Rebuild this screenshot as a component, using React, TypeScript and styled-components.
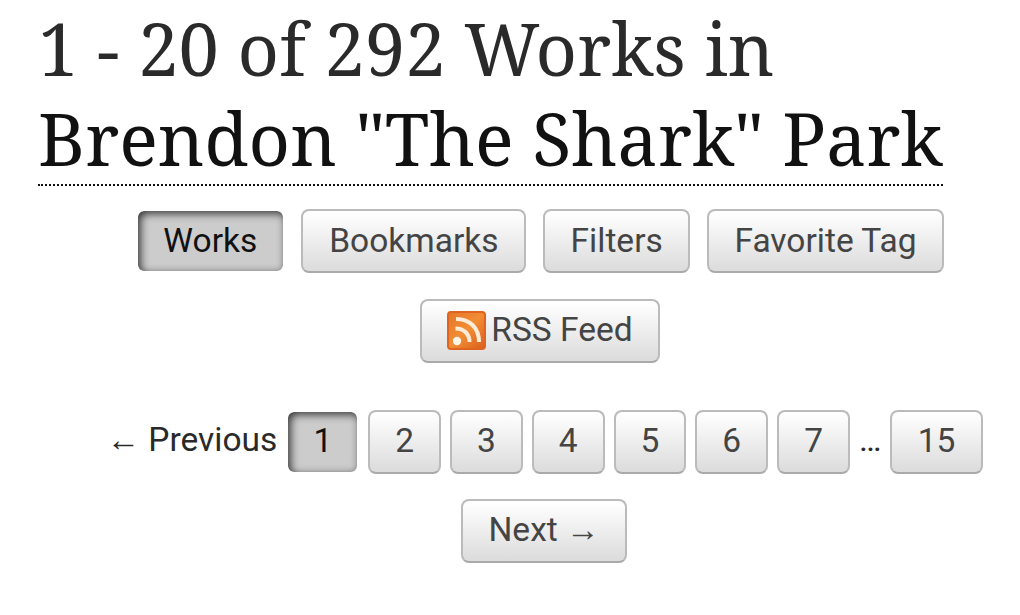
import React from 'react';
import styled, { createGlobalStyle, css } from 'styled-components';

const GlobalStyle = createGlobalStyle`
  * { box-sizing: border-box; }
  html, body { margin: 0; background: #fff; }
  body { color: #2a2a2a; font-family: Roboto, sans-serif; }
`;

const Page = styled.main`
  width: 1020px;
  height: 615px;
  overflow: hidden;
  padding: 3px 36px 0 38px;
`;

const Heading = styled.h2`
  margin: 0;
  font: 400 72.15px/90px 'Noto Serif', 'DejaVu Serif Condensed', 'DejaVu Serif', serif;
  white-space: nowrap;
`;

const HeadingLine = styled.span`
  display: block;
  height: 90px;
`;

const TagLink = styled.a`
  display: block;
  width: 905px;
  height: 93px;
  color: #111;
  border-bottom: 2px dotted #111;
`;

const Row = styled.ul<{ $top: number; $left: number; $gap: number }>`
  display: flex;
  list-style: none;
  padding: 0;
  margin: ${p => p.$top}px 0 0 ${p => p.$left}px;
  gap: ${p => p.$gap}px;
  height: 64px;
`;

const Label = styled.li<{ $width: number }>`
  width: ${p => p.$width}px;
  font-size: 33.5px;
  line-height: 60px;
  white-space: nowrap;
`;

const Button = styled.a<{ $width: number; $current?: boolean; $lift?: number }>`
  display: flex;
  align-items: center;
  justify-content: center;
  width: ${p => p.$width}px;
  height: 64px;
  padding-bottom: ${p => p.$lift ?? 1}px;
  border: 2px solid #bbb;
  border-bottom-color: #aaa;
  border-radius: 8px;
  background: linear-gradient(#fff 2%, #ddd 95%);
  color: #444;
  font-size: 33.5px;
  line-height: 60px;
  white-space: pre;
  ${p => p.$current && css`
    color: #111;
    background: #ccc;
    border-color: #fff;
    box-shadow: inset 2.6px 2.6px 8px #333;
  `}
`;

const Arrow = styled.span`
  font: 33.5px/30px 'Liberation Serif', serif;
`;

const FeedIcon = styled.svg`
  width: 40px;
  height: 40px;
  margin-right: 4px;
`;

const pages = ['1', '2', '3', '4', '5', '6', '7'];

function RssIcon() {
  return (
    <FeedIcon viewBox="0 0 40 40" aria-hidden="true">
      <defs>
        <linearGradient id="feed" x1="0" y1="0" x2="1" y2="1">
          <stop offset="0" stopColor="#e47628" />
          <stop offset=".5" stopColor="#f28d35" />
          <stop offset="1" stopColor="#d95d1b" />
        </linearGradient>
      </defs>
      <rect x="1" y="2" width="37" height="37" rx="3" fill="url(#feed)" stroke="#df6420" strokeWidth="2" />
      <circle cx="10" cy="31" r="4.2" fill="#fff5e9" />
      <path d="M8.5 18.5C17 18.5 22.5 24 22.5 32M9 9C23 9 32 18 32 32" fill="none" stroke="#ffecd8" strokeWidth="4" />
    </FeedIcon>
  );
}

export default function App() {
  return (
    <>
      <GlobalStyle />
      <Page>
        <Heading>
          <HeadingLine>1 - 20 of 292 Works in</HeadingLine>
          <TagLink>Brendon "The Shark" Park</TagLink>
        </Heading>
        <Row $top={23} $left={98} $gap={16.8}>
          <li><Button $width={148.6} $current>Works</Button></li>
          <li><Button $width={225}>Bookmarks</Button></li>
          <li><Button $width={147}>Filters</Button></li>
          <li><Button $width={237}>Favorite Tag</Button></li>
        </Row>
        <Row $top={26} $left={382} $gap={0}>
          <li><Button $width={240} $lift={3}><RssIcon />RSS Feed</Button></li>
        </Row>
        <Row $top={47} $left={68.5} $gap={9}>
          <Label $width={170.9}><Arrow>←</Arrow> Previous</Label>
          {pages.map((page, i) => (
            <li key={page}><Button $width={72.8} $current={i === 0} $lift={2}>{page}</Button></li>
          ))}
          <Label $width={22}>…</Label>
          <li><Button $width={93} $lift={2}>15</Button></li>
        </Row>
        <Row $top={25} $left={423} $gap={0}>
          <li><Button $width={166} $lift={3}>Next <Arrow>→</Arrow></Button></li>
        </Row>
      </Page>
    </>
  );
}
